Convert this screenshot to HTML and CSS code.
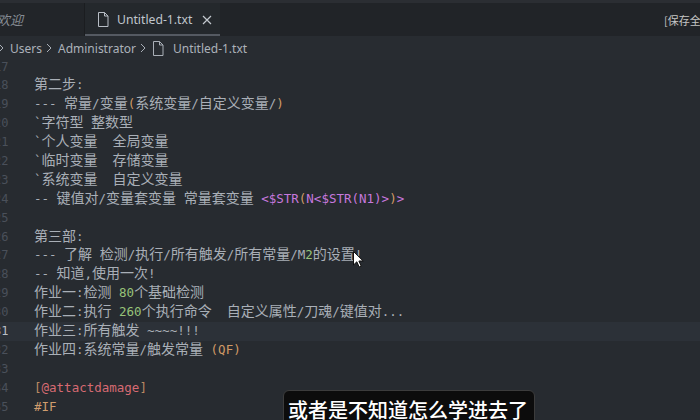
FILE: index.html
```html
<!DOCTYPE html>
<html lang="zh-CN">
<head>
<meta charset="utf-8">
<title>Untitled-1.txt</title>
<link rel="stylesheet" href="styles.css">
</head>
<body>
<div class="app">
  <div class="tabbar">
    <div class="tab welcome"><span class="welcome-text">欢迎</span></div>
    <div class="tab active">
      <svg class="fileicon" width="12" height="15" viewBox="0 0 12 15"><path d="M1.5 0.5 H7.5 L11 4 V14.5 H1.5 Z M7.5 0.5 V4 H11" fill="none" stroke="#b8bec6" stroke-width="1"/></svg>
      <span class="tabname">Untitled-1.txt</span>
      <svg class="close" width="10" height="10" viewBox="0 0 10 10"><path d="M1 1 L9 9 M9 1 L1 9" stroke="#c3c8ce" stroke-width="1.2"/></svg>
    </div>
    <div class="spacer"></div>
    <div class="save">[保存全部]</div>
  </div>
  <div class="crumbs">
    <svg class="chev first" width="6" height="10" viewBox="0 0 6 10"><path d="M1 1 L5 5 L1 9" fill="none" stroke="#a9afb7" stroke-width="1"/></svg>
    <span class="crumb">Users</span>
    <svg class="chev" width="6" height="10" viewBox="0 0 6 10"><path d="M1 1 L5 5 L1 9" fill="none" stroke="#a9afb7" stroke-width="1"/></svg>
    <span class="crumb">Administrator</span>
    <svg class="chev" width="6" height="10" viewBox="0 0 6 10"><path d="M1 1 L5 5 L1 9" fill="none" stroke="#a9afb7" stroke-width="1"/></svg>
    <svg class="fileicon crumbicon" width="12" height="15" viewBox="0 0 12 15"><path d="M1.5 0.5 H7.5 L11 4 V14.5 H1.5 Z M7.5 0.5 V4 H11" fill="none" stroke="#a9afb7" stroke-width="1"/></svg>
    <span class="crumb">Untitled-1.txt</span>
  </div>
  <div class="editor">
    <div class="lines">
      <div class="l"><span class="n">17</span><span class="c"></span></div>
      <div class="l"><span class="n">18</span><span class="c"><span class="z">第二步</span>:</span></div>
      <div class="l"><span class="n">19</span><span class="c">--- <span class="z">常量</span>/<span class="z">变量</span><span class="o">(</span><span class="z">系统变量</span>/<span class="z">自定义变量</span>/<span class="o">)</span></span></div>
      <div class="l"><span class="n">20</span><span class="c">`<span class="z">字符型</span> <span class="z">整数型</span></span></div>
      <div class="l"><span class="n">21</span><span class="c">`<span class="z">个人变量</span>  <span class="z">全局变量</span></span></div>
      <div class="l"><span class="n">22</span><span class="c">`<span class="z">临时变量</span>  <span class="z">存储变量</span></span></div>
      <div class="l"><span class="n">23</span><span class="c">`<span class="z">系统变量</span>  <span class="z">自定义变量</span></span></div>
      <div class="l"><span class="n">24</span><span class="c">-- <span class="z">键值对</span>/<span class="z">变量套变量</span> <span class="z">常量套变量</span> <span class="p">&lt;$STR</span><span class="o">(</span><span class="p">N&lt;$STR(N1)&gt;</span><span class="o">)</span><span class="p">&gt;</span></span></div>
      <div class="l"><span class="n">25</span><span class="c"></span></div>
      <div class="l"><span class="n">26</span><span class="c"><span class="z">第三部</span>:</span></div>
      <div class="l"><span class="n">27</span><span class="c">--- <span class="z">了解</span> <span class="z">检测</span>/<span class="z">执行</span>/<span class="z">所有触发</span>/<span class="z">所有常量</span>/M<span class="g">2</span><span class="z">的设置</span>!</span></div>
      <div class="l"><span class="n">28</span><span class="c">-- <span class="z">知道</span>,<span class="z">使用一次</span>!</span></div>
      <div class="l"><span class="n">29</span><span class="c"><span class="z">作业一</span>:<span class="z">检测</span> <span class="g">80</span><span class="z">个基础检测</span></span></div>
      <div class="l"><span class="n">30</span><span class="c"><span class="z">作业二</span>:<span class="z">执行</span> <span class="g">260</span><span class="z">个执行命令</span>  <span class="z">自定义属性</span>/<span class="z">刀魂</span>/<span class="z">键值对</span>...</span></div>
      <div class="l cur"><span class="n">31</span><span class="c"><span class="z">作业三</span>:<span class="z">所有触发</span> ~~~~!!!</span></div>
      <div class="l"><span class="n">32</span><span class="c"><span class="z">作业四</span>:<span class="z">系统常量</span>/<span class="z">触发常量</span> <span class="o">(QF)</span></span></div>
      <div class="l"><span class="n">33</span><span class="c"></span></div>
      <div class="l"><span class="n">34</span><span class="c"><span class="b">[</span><span class="r">@attactdamage</span><span class="b">]</span></span></div>
      <div class="l"><span class="n">35</span><span class="c"><span class="h">#IF</span></span></div>
      <div class="l"><span class="n">36</span><span class="c"></span></div>
    </div>
  </div>
  <svg class="pointer" width="11" height="17" viewBox="0 0 11 17"><path d="M0.5 0.5 V14 L3.8 10.8 L6.2 16 L8.2 15.1 L5.9 10 H10.2 Z" fill="#ffffff" stroke="#111111" stroke-width="1"/></svg>
  <div class="subtitle">或者是不知道怎么学进去了</div>
</div>
</body>
</html>
```
FILE: styles.css
```css
html, body {
  margin: 0;
  padding: 0;
  width: 700px;
  height: 420px;
  overflow: hidden;
  background: #272b30;
}

.app {
  position: relative;
  width: 700px;
  height: 420px;
  overflow: hidden;
  display: flex;
  flex-direction: column;
  background: #272b30;
  font-family: "Noto Sans", "Noto Sans CJK SC", sans-serif;
}

.tabbar {
  display: flex;
  height: 33px;
  border-top: 3px solid #2b2e33;
  background: #212428;
  flex: 0 0 auto;
}

.tab {
  display: flex;
  align-items: center;
  height: 100%;
  box-sizing: border-box;
  flex-shrink: 0;
  white-space: nowrap;
}

.welcome {
  width: 85px;
  background: #222529;
  border-right: 1px solid #1b1d20;
}

.welcome-text {
  margin-left: -3px;
  font-style: italic;
  font-size: 13px;
  color: #868c94;
  font-family: "Noto Sans CJK SC", sans-serif;
}

.active {
  width: 135px;
  background: #24282c;
  border-bottom: 2px solid #555a62;
  padding-left: 12px;
  padding-top: 2px;
}

.tabname {
  margin-left: 8px;
  font-size: 12.2px;
  color: #c0c6cd;
}

.close {
  margin-left: 10px;
  flex-shrink: 0;
}

.fileicon {
  flex-shrink: 0;
}

.spacer {
  flex: 1 1 auto;
}

.save {
  flex: 0 0 36px;
  overflow: hidden;
  white-space: nowrap;
  font-size: 11px;
  color: #c4c4c4;
  display: flex;
  align-items: center;
  font-family: "Noto Sans CJK SC", sans-serif;
}

.crumbs {
  flex: 0 0 auto;
  height: 24px;
  display: flex;
  align-items: center;
  background: #282c31;
  font-size: 12px;
  color: #acb2ba;
  white-space: nowrap;
}

.chev {
  margin: 0 6px 0 4px;
  flex-shrink: 0;
}

.chev.first {
  margin-left: -2px;
}

.crumbicon {
  margin-right: 9px;
}

.editor {
  flex: 1 1 auto;
  overflow: hidden;
  background: #272b30;
}

.lines {
  margin-top: -2.5px;
  margin-left: -21.5px;
  font-family: "DejaVu Sans Mono", "Noto Sans CJK SC", monospace;
  font-size: 12.5px;
  color: #a9afb7;
}

.l {
  display: flex;
  height: 18.9px;
  line-height: 18.9px;
  white-space: pre;
}

.l.cur {
  background: #2c3138;
}

.n {
  flex: 0 0 30px;
  text-align: right;
  color: #4a505a;
  font-size: 12px;
}

.cur .n {
  color: #b8bec6;
}

.c {
  padding-left: 25.5px;
}

.z {
  font-family: "Noto Sans CJK SC", sans-serif;
  font-size: 14px;
  line-height: 1;
}

.o { color: #d19a66; }
.p { color: #c678dd; }
.g { color: #98c379; }
.r { color: #d66a72; }
.b { color: #b98a62; }
.h { color: #cf9d6e; }

.pointer {
  position: absolute;
  left: 353px;
  top: 251px;
}

.subtitle {
  position: absolute;
  left: 283px;
  top: 390px;
  width: 252px;
  height: 40px;
  box-sizing: border-box;
  background: #0c0c0c;
  border: 1px solid #3c3c3c;
  border-radius: 6px;
  padding: 5px 0 0 4px;
  font-family: "Noto Sans CJK SC", sans-serif;
  font-size: 20px;
  line-height: 28px;
  font-weight: 500;
  color: #ffffff;
  white-space: nowrap;
}
```
